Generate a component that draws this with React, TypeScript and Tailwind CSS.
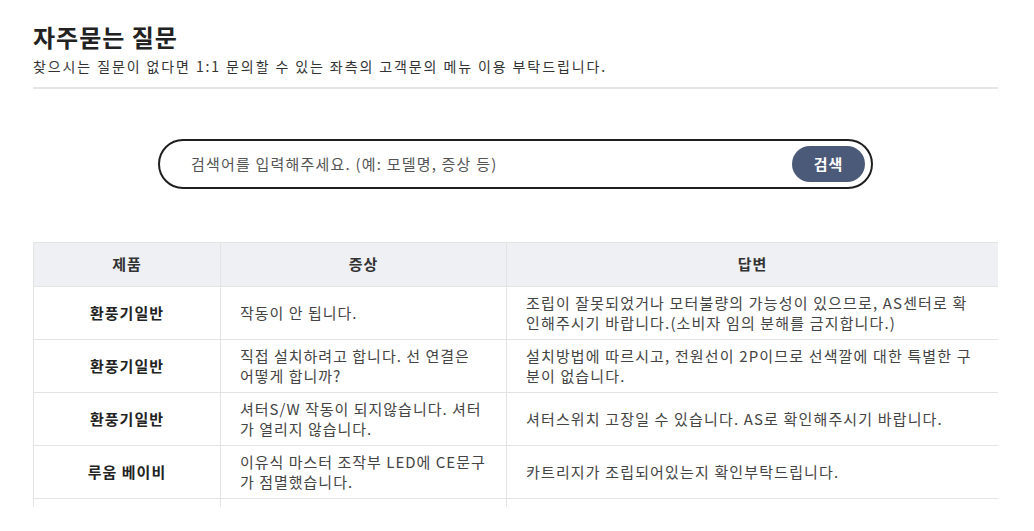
const rows = [
  {
    product: "환풍기일반",
    symptom: "작동이 안 됩니다.",
    answer: "조립이 잘못되었거나 모터불량의 가능성이 있으므로, AS센터로 확인해주시기 바랍니다.(소비자 임의 분해를 금지합니다.)",
  },
  {
    product: "환풍기일반",
    symptom: "직접 설치하려고 합니다. 선 연결은 어떻게 합니까?",
    answer: "설치방법에 따르시고, 전원선이 2P이므로 선색깔에 대한 특별한 구분이 없습니다.",
  },
  {
    product: "환풍기일반",
    symptom: "셔터S/W 작동이 되지않습니다. 셔터가 열리지 않습니다.",
    answer: "셔터스위치 고장일 수 있습니다. AS로 확인해주시기 바랍니다.",
  },
  {
    product: "루움 베이비",
    symptom: "이유식 마스터 조작부 LED에 CE문구가 점멸했습니다.",
    answer: "카트리지가 조립되어있는지 확인부탁드립니다.",
  },
]

export default function App() {
  return (
    <div
      className="w-[1034px] h-[531px] overflow-hidden bg-white text-[#333]"
      style={{ fontFamily: '"Noto Sans CJK KR", "Noto Sans", sans-serif' }}
    >
      <div className="pt-[21px] pl-[33px] w-[998px]">
        <h1 className="text-[24px] font-bold leading-[32px] text-[#222] tracking-[1px]">자주묻는 질문</h1>
        <p className="mt-[3px] text-[14px] leading-[20px] text-[#333] tracking-[1.9px]">
          찾으시는 질문이 없다면 1:1 문의할 수 있는 좌측의 고객문의 메뉴 이용 부탁드립니다.
        </p>
        <div className="mt-[11px] h-[2px] bg-[#e6e6e6]" />

        {/* search */}
        <div className="mt-[50px] ml-[125px] w-[715px] h-[50px] rounded-full border-2 border-[#1f1f1f] flex items-center pl-[31px] pr-[6px]">
          <span className="flex-1 text-[15px] text-[#555] tracking-[1.2px]">
            검색어를 입력해주세요. (예: 모델명, 증상 등)
          </span>
          <button className="w-[73px] h-[36px] rounded-full bg-[#4c5a79] text-white text-[15px] font-bold tracking-[1px]">
            검색
          </button>
        </div>

        {/* table */}
        <div className="mt-[53px] w-[965px] h-[265px] overflow-hidden">
          <div className="grid grid-cols-[187px_286px_492px] border-l border-t border-[#e3e3e3] text-[15px] tracking-[1px]">
            <div className="h-[44px] bg-[#eef0f3] flex items-center justify-center font-bold border-r border-b border-[#e3e3e3]">제품</div>
            <div className="h-[44px] bg-[#eef0f3] flex items-center justify-center font-bold border-r border-b border-[#e3e3e3]">증상</div>
            <div className="h-[44px] bg-[#eef0f3] flex items-center justify-center font-bold border-r border-b border-[#e3e3e3]">답변</div>
            {rows.map((r, i) => (
              <div key={i} className="contents">
                <div className="h-[53px] flex items-center justify-center font-bold text-[#222] border-r border-b border-[#e3e3e3]">
                  {r.product}
                </div>
                <div className="h-[53px] flex items-center px-[19px] leading-[20px] text-[#444] border-r border-b border-[#e3e3e3]">
                  {r.symptom}
                </div>
                <div className="h-[53px] flex items-center px-[19px] leading-[20px] text-[#444] break-all tracking-[1.15px] border-r border-b border-[#e3e3e3]">
                  <span>{r.answer}</span>
                </div>
              </div>
            ))}
            {/* next row, scrolled out of view */}
            <div className="h-[53px] border-r border-[#e3e3e3]" />
            <div className="h-[53px] border-r border-[#e3e3e3]" />
            <div className="h-[53px] border-r border-[#e3e3e3]" />
          </div>
        </div>
      </div>
    </div>
  )
}
